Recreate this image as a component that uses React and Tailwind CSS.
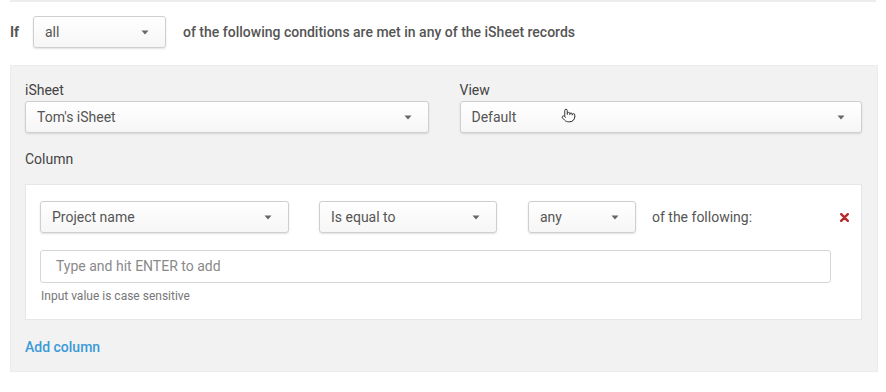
import { Pointer } from 'lucide-react';

const Caret = () => (
    <svg width="8" height="5" viewBox="0 0 8 5" className="shrink-0">
        <path d="M0.5 0.5 L7.5 0.5 L4 4.5 Z" fill="#666" />
    </svg>
);

const Select = ({ value, className = '' }) => (
    <div
        className={`flex items-center justify-between h-[32px] pl-[11px] pr-[16px] rounded-[3px] border border-[#cfcfcf] bg-gradient-to-b from-white to-[#f6f6f6] shadow-[0_1px_2px_rgba(0,0,0,0.12)] text-[14px] text-[#555] ${className}`}
    >
        <span>{value}</span>
        <Caret />
    </div>
);

export default function App() {
    return (
        <div className="w-[886px] h-[392px] bg-white overflow-hidden font-['Roboto','Liberation_Sans',sans-serif]">
            <div className="mx-[10px] h-[2px] bg-[#ededed]" />

            <div className="flex items-center mt-[14px] pl-[10px]">
                <span className="text-[14px] font-bold text-[#555] w-[23px]">If</span>
                <Select value="all" className="w-[133px]" />
                <span className="ml-[17px] text-[14px] font-medium text-[#555]">
                    of the following conditions are met in any of the iSheet records
                </span>
            </div>

            <div className="mt-[17px] ml-[10px] w-[868px] h-[307px] bg-[#f2f2f2] border border-[#ececec] pt-[16px] pl-[14px] pr-[15px]">
                <div className="flex gap-[31px]">
                    <div className="w-[404px]">
                        <div className="text-[14px] text-[#444] leading-[16px] mb-[3px]">iSheet</div>
                        <Select value="Tom's iSheet" />
                    </div>
                    <div className="w-[403px] relative">
                        <div className="text-[14px] text-[#444] leading-[16px] mb-[3px]">View</div>
                        <Select value="Default" />
                        <Pointer className="absolute left-[101px] top-[26px] w-[15px] h-[15px] text-[#333]" strokeWidth={1.6} fill="white" />
                    </div>
                </div>

                <div className="mt-[18px] text-[14px] text-[#444] leading-[16px]">Column</div>

                <div className="mt-[17px] w-[837px] h-[136px] bg-white border border-[#e6e6e6] pt-[16px] pl-[14px] pr-[12px]">
                    <div className="flex items-center">
                        <Select value="Project name" className="w-[249px]" />
                        <Select value="Is equal to" className="w-[178px] ml-[30px]" />
                        <Select value="any" className="w-[108px] ml-[31px]" />
                        <span className="ml-[16px] text-[14px] text-[#555]">of the following:</span>
                        <svg width="9" height="9" viewBox="0 0 9 9" className="ml-auto">
                            <path d="M1.2 1.2 L7.8 7.8 M7.8 1.2 L1.2 7.8" stroke="#b52a2a" strokeWidth="2.4" strokeLinecap="round" />
                        </svg>
                    </div>
                    <div className="mt-[17px] w-[791px] h-[33px] rounded-[3px] border border-[#d6d6d6] flex items-center pl-[15px] text-[14px] text-[#8a8a8a]">
                        Type and hit ENTER to add
                    </div>
                    <div className="mt-[4px] pl-[1px] text-[12px] text-[#777]">Input value is case sensitive</div>
                </div>

                <div className="mt-[17px] text-[14px] font-medium text-[#3b9ad9]">Add column</div>
            </div>
        </div>
    );
}
